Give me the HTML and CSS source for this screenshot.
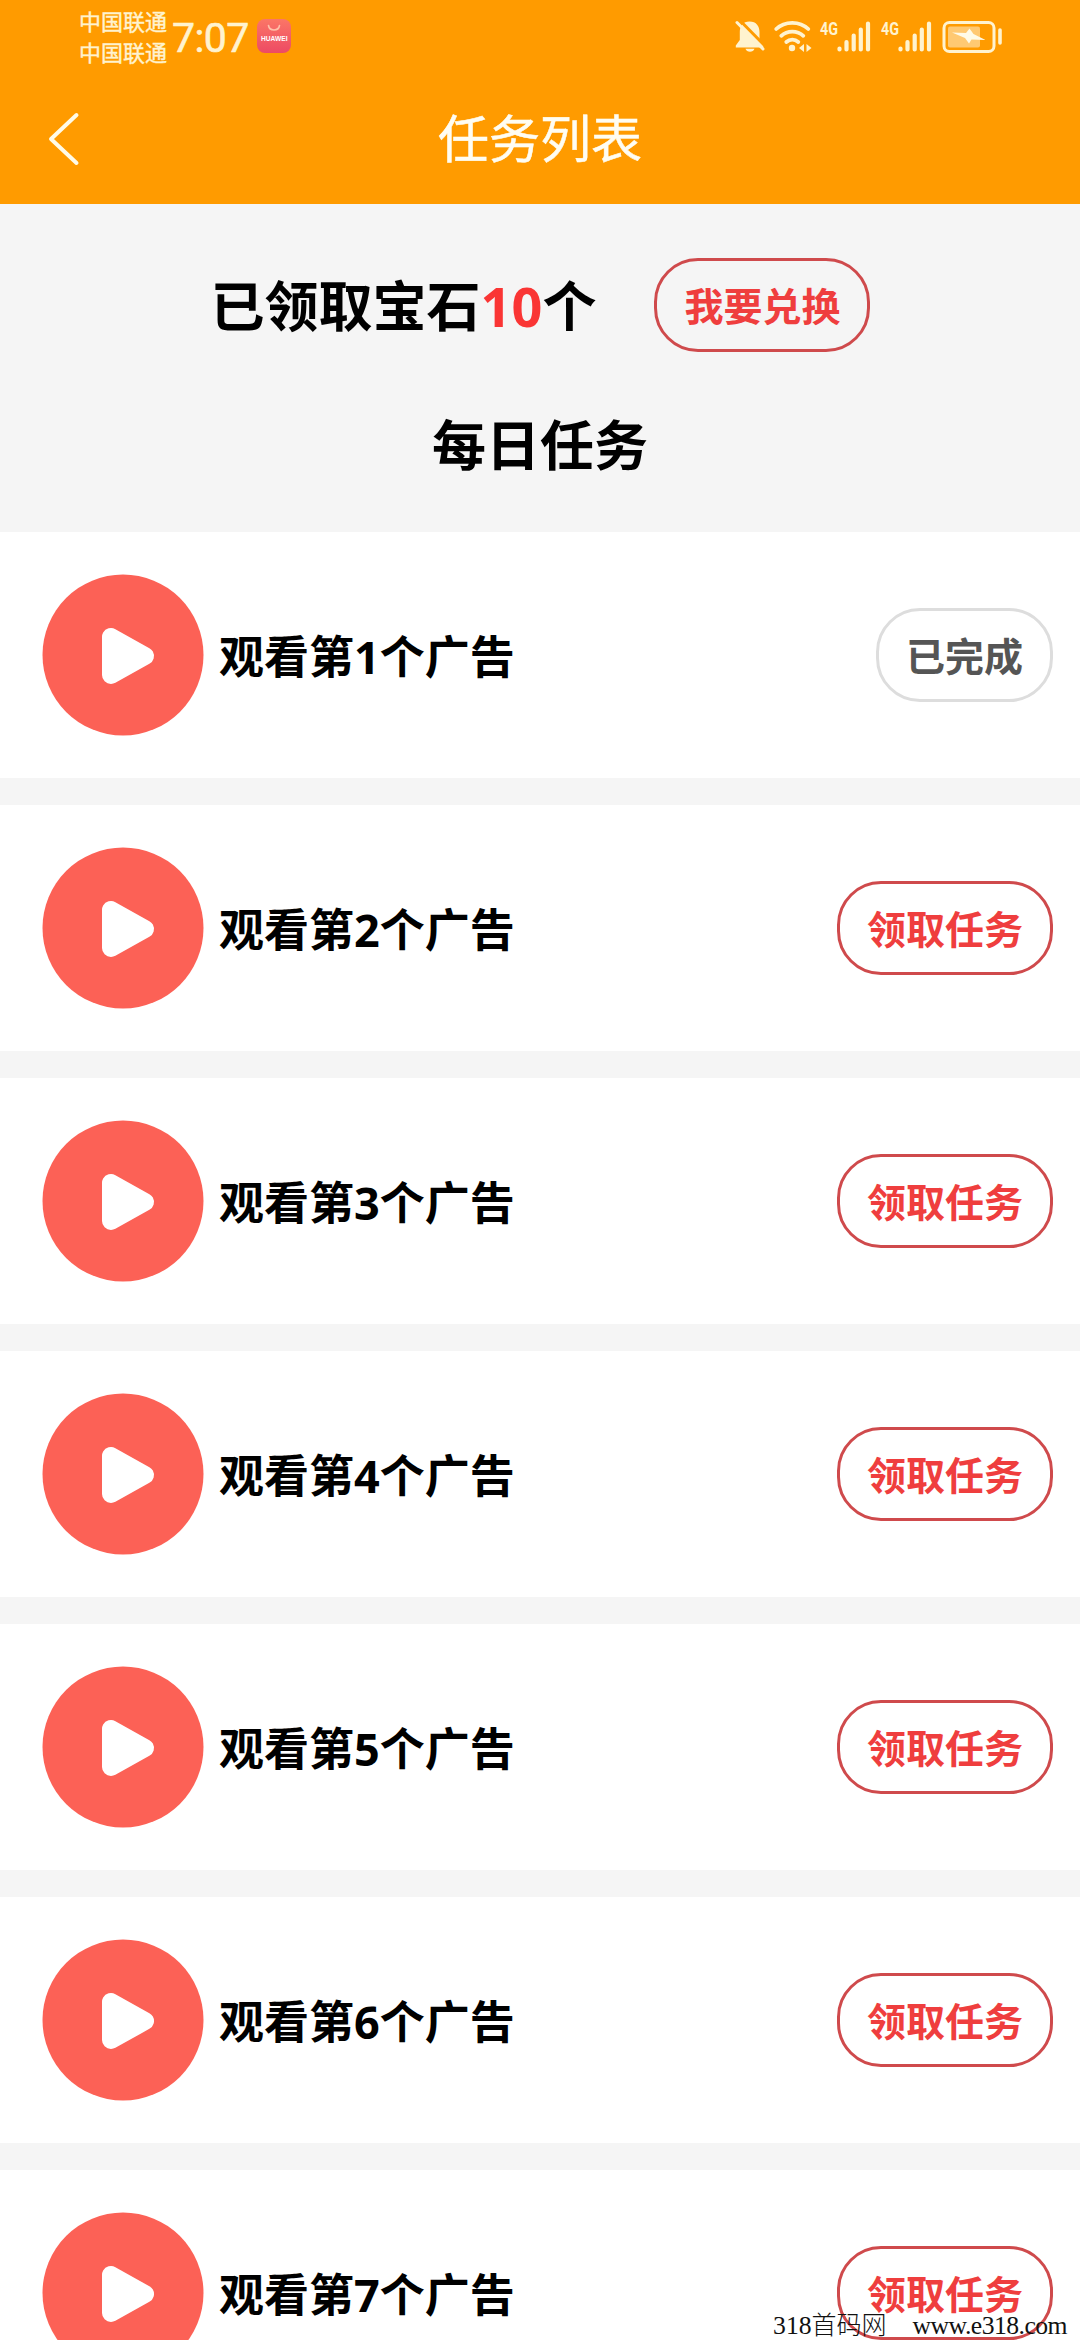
FILE: index.html
```html
<!DOCTYPE html>
<html lang="zh-CN">
<head>
<meta charset="utf-8">
<title>任务列表</title>
<link rel="stylesheet" href="styles.css">
</head>
<body>
<svg class="defs" width="0" height="0" aria-hidden="true">
  <symbol id="play" viewBox="0 0 162 162">
    <circle cx="81" cy="81" r="80.5" fill="#fc6156"/>
    <path d="M69 63v38L103 82z" fill="#fff" stroke="#fff" stroke-width="18" stroke-linejoin="round"/>
  </symbol>
</svg>
<div class="screen">
  <header class="top">
    <div class="status">
      <div class="carriers"><span>中国联通</span><span>中国联通</span></div>
      <span class="clock">7:07</span>
      <svg class="store" viewBox="0 0 34 34">
        <defs><linearGradient id="sg" x1="0" y1="0" x2="0" y2="1"><stop offset="0" stop-color="#fb7666"/><stop offset="1" stop-color="#ed4a64"/></linearGradient></defs>
        <rect width="34" height="34" rx="8" fill="url(#sg)"/>
        <path d="M11.500 6.500c1 6 10 6 11 0" fill="none" stroke="#ffc0a8" stroke-width="1.600" stroke-linecap="round"/>
        <text x="4" y="21.500" class="brand" textLength="26.500" lengthAdjust="spacingAndGlyphs">HUAWEI</text>
      </svg>
      <div class="indicators">
        <svg class="bell" viewBox="0 0 30 34">
          <path d="M14.500 1.500c7 0 10 5 10 10.500v8l4 5.500v2H.8v-2l4-5.500v-8c0-5.500 3-10.500 9.700-10.500zM10.500 28.800h9c-1 4-8 4-9 0z" fill="#fff3cf"/>
          <path d="M4.500 0L31 27" stroke="#ff9b00" stroke-width="3" fill="none"/>
          <path d="M2 2.500L28 29" stroke="#fff3cf" stroke-width="3" stroke-linecap="round" fill="none"/>
        </svg>
        <svg class="wifi" viewBox="0 0 38 34">
          <g fill="none" stroke="#fff3cf" stroke-width="3.800" stroke-linecap="round"><path d="M2.200 9c8.500-8.300 23.600-8.300 32.100 0"/><path d="M7.300 15.800c6-5.700 16-5.700 22 0"/><path d="M12.300 22c3.500-3 8.500-3 12 0"/></g>
          <circle cx="18" cy="28" r="3.200" fill="#fff3cf"/>
          <path d="M30 24v8l-5-4zM32.500 24v8l5-4z" fill="#fff3cf"/>
        </svg>
        <svg class="cell" viewBox="0 0 52 34">
          <text x="0" y="15" class="net" textLength="18" lengthAdjust="spacingAndGlyphs">4G</text>
          <path d="M19.500 28.500v1M26.500 22v7.500M33.700 15.500v14M40.800 9.500v20M48 3.500v26" fill="none" stroke="#fff3cf" stroke-width="4.200" stroke-linecap="round"/>
        </svg>
        <svg class="cell second" viewBox="0 0 52 34">
          <text x="0" y="15" class="net" textLength="18" lengthAdjust="spacingAndGlyphs">4G</text>
          <path d="M19.500 28.500v1M26.500 22v7.500M33.700 15.500v14M40.800 9.500v20M48 3.500v26" fill="none" stroke="#fff3cf" stroke-width="4.200" stroke-linecap="round"/>
        </svg>
        <svg class="battery" viewBox="0 0 61 34">
          <rect x="2" y="2.500" width="50" height="29" rx="5.500" fill="none" stroke="#fff3cf" stroke-width="3"/>
          <rect x="6" y="6.500" width="32" height="21" rx="2" fill="#ffc972"/>
          <path d="M10 12.500l14 .5 3.500-4.500 4 5.500 12 6-14-.5-2.500 4-4-5.500z" fill="#fffbe8"/>
          <path d="M58 10v13" stroke="#fff3cf" stroke-width="3.600" stroke-linecap="round"/>
        </svg>
      </div>
    </div>
    <div class="nav">
      <svg class="back" viewBox="0 0 32 54"><path d="M28.500 3L3 27l25.500 24" fill="none" stroke="#fffbe8" stroke-width="4" stroke-linecap="round" stroke-linejoin="round"/></svg>
      <h1 class="title">任务列表</h1>
    </div>
  </header>
  <section class="summary">
    <div class="gems"><span class="count">已领取宝石<b class="num">10</b>个</span><button class="pill">我要兑换</button></div>
    <h2 class="daily">每日任务</h2>
  </section>
  <main class="tasks">
    <div class="task"><svg class="play"><use href="#play"/></svg><span class="name">观看第<b class="n">1</b>个广告</span><button class="pill done">已完成</button></div>
    <div class="task"><svg class="play"><use href="#play"/></svg><span class="name">观看第<b class="n">2</b>个广告</span><button class="pill">领取任务</button></div>
    <div class="task"><svg class="play"><use href="#play"/></svg><span class="name">观看第<b class="n">3</b>个广告</span><button class="pill">领取任务</button></div>
    <div class="task"><svg class="play"><use href="#play"/></svg><span class="name">观看第<b class="n">4</b>个广告</span><button class="pill">领取任务</button></div>
    <div class="task"><svg class="play"><use href="#play"/></svg><span class="name">观看第<b class="n">5</b>个广告</span><button class="pill">领取任务</button></div>
    <div class="task"><svg class="play"><use href="#play"/></svg><span class="name">观看第<b class="n">6</b>个广告</span><button class="pill">领取任务</button></div>
    <div class="task"><svg class="play"><use href="#play"/></svg><span class="name">观看第<b class="n">7</b>个广告</span><button class="pill">领取任务</button></div>
  </main>
  <div class="mark"><span>318<span class="han">首码网</span></span><span class="url">www.e318.com</span></div>
</div>
</body>
</html>
```
FILE: styles.css
```css
* { box-sizing: border-box; }
body { margin: 0; background: #f5f5f5; font-family: "Noto Sans CJK SC", sans-serif; }
.defs { display: block; position: absolute; }
.screen { position: relative; width: 1080px; height: 2340px; overflow: hidden; }

.top { height: 204px; background: #ff9b00; color: #fff3cf; }
.status { display: flex; align-items: flex-start; height: 72px; padding: 0 77px 0 79px; }
.status svg { overflow: visible; }
.carriers { display: flex; flex-direction: column; padding-top: 4px; width: 93px; }
.carriers span { font-size: 22px; line-height: 32px; white-space: nowrap; -webkit-text-stroke: .4px #fff3cf; }
.carriers span + span { margin-top: -1px; }
.clock { width: 85px; padding-top: 14px; font: 400 41px/48px Roboto, sans-serif; letter-spacing: -0.6px; -webkit-text-stroke: .6px #fff3cf; }
.store { width: 34px; height: 34px; margin-top: 19px; }
.brand { font: 700 7px "Liberation Sans", sans-serif; fill: #fff; }
.indicators { display: flex; margin-left: auto; padding-top: 20px; }
.bell { width: 30px; height: 34px; }
.wifi { width: 38px; height: 34px; margin-left: 9px; }
.cell { width: 52px; height: 34px; margin-left: 8px; }
.second { margin-left: 9px; }
.battery { width: 61px; height: 34px; margin-left: 9px; }
.net { font: 700 19px Roboto, sans-serif; fill: #fff3cf; }
.nav { display: grid; grid-template-columns: 48px 1fr 48px; height: 132px; align-items: center; }
.back { grid-column: 2; grid-row: 1; width: 32px; height: 54px; margin-top: 1px; }
.title { grid-column: 2; grid-row: 1; justify-self: center; margin: -5px 0 0; color: #fffdf2; font-size: 51px; font-weight: 400; line-height: 76px; -webkit-text-stroke: .5px #fffdf2; }

.summary { height: 328px; display: flex; flex-direction: column; align-items: center; padding-top: 54px; }
.gems { display: flex; align-items: center; gap: 58px; height: 94px; padding-left: 1px; }
.count { margin-top: -2px; font-size: 54px; line-height: 80px; font-weight: 700; }
.num { font-family: "Noto Sans", sans-serif; font-weight: 700; line-height: 0; color: #fa3534; }
.daily { margin: 51px 0 0; font-size: 54px; line-height: 80px; font-weight: 700; }

.pill { height: 94px; padding: 0 27px 2px; border: 3px solid #cf4a4c; border-radius: 44px; background: transparent; color: #ef3e3e; font: 700 39px/56px "Noto Sans CJK SC", sans-serif; white-space: nowrap; }
.done { border-color: #ddd; color: #555; }

.tasks { display: flex; flex-direction: column; gap: 27px; }
.task { display: flex; align-items: center; height: 246px; padding: 0 27px 0 42px; background: #fff; }
.play { width: 162px; height: 162px; }
.name { margin-left: 15px; font-size: 45px; line-height: 66px; font-weight: 700; }
.n { font-family: "Noto Sans", sans-serif; font-weight: 700; line-height: 0; }
.task .pill { margin-left: auto; }

.mark { position: absolute; right: 13px; bottom: -1px; display: flex; align-items: baseline; gap: 26px; color: #111; font: 400 25.7px/30px "Liberation Serif", serif; white-space: nowrap; }
.han { font: 300 25px/0 "Noto Sans CJK SC", sans-serif; }
.url { letter-spacing: -0.55px; }
```
